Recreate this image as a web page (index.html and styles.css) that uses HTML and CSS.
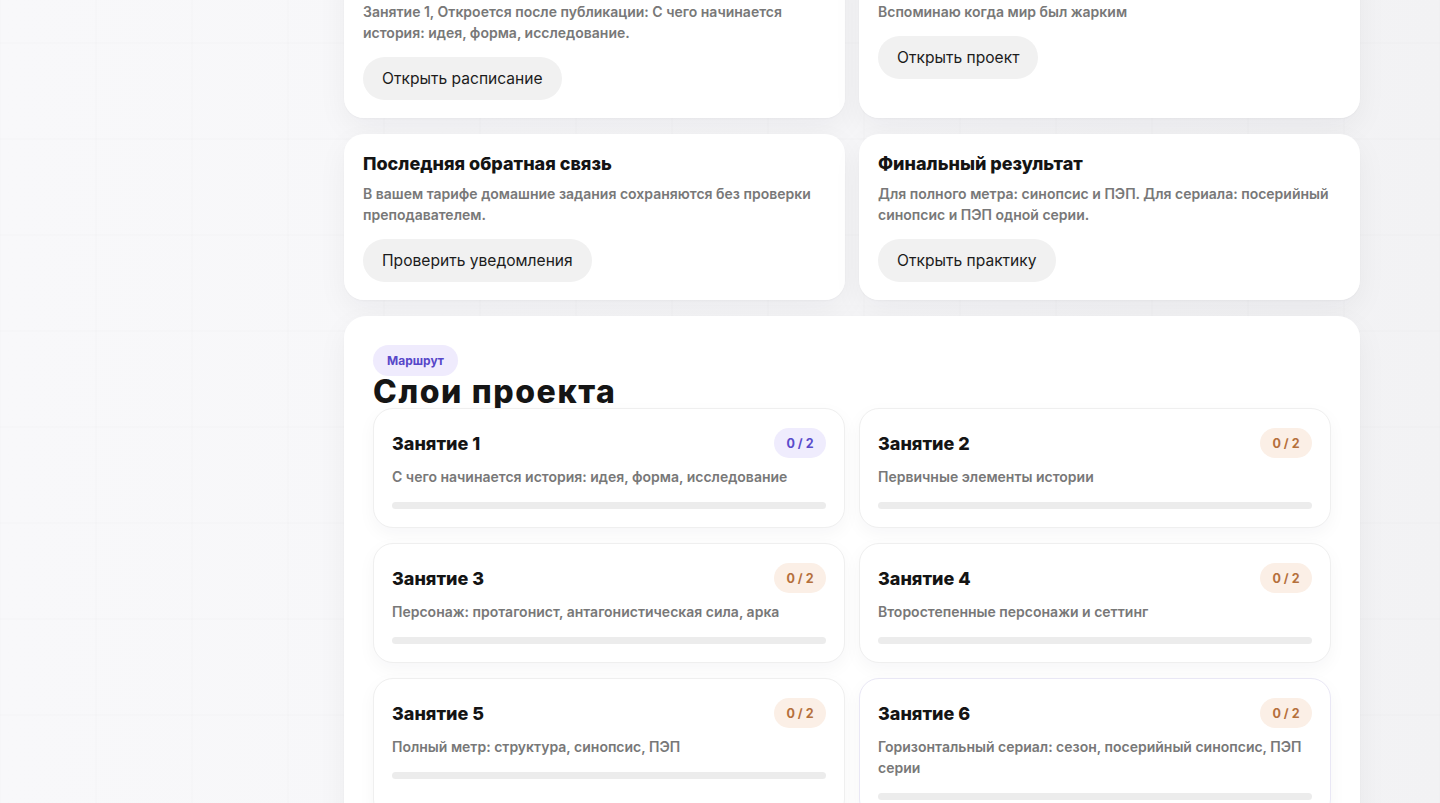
FILE: index.html
```
<!DOCTYPE html>
<html lang="ru">
<head>
<meta charset="utf-8">
<title>Слои проекта</title>
<link rel="stylesheet" href="styles.css">
</head>
<body>
<div class="page">
  <main class="main">
    <section class="info-grid">
      <article class="card">
        <h3 class="card-title">Ближайшее занятие</h3>
        <p class="card-text">Занятие 1, Откроется после публикации: С чего начинается история: идея, форма, исследование.</p>
        <button class="btn">Открыть расписание</button>
      </article>
      <article class="card">
        <h3 class="card-title">Текущий проект</h3>
        <p class="card-text">Вспоминаю когда мир был жарким</p>
        <button class="btn">Открыть проект</button>
      </article>
      <article class="card">
        <h3 class="card-title">Последняя обратная связь</h3>
        <p class="card-text">В вашем тарифе домашние задания сохраняются без проверки преподавателем.</p>
        <button class="btn">Проверить уведомления</button>
      </article>
      <article class="card">
        <h3 class="card-title">Финальный результат</h3>
        <p class="card-text">Для полного метра: синопсис и ПЭП. Для сериала: посерийный синопсис и ПЭП одной серии.</p>
        <button class="btn">Открыть практику</button>
      </article>
    </section>

    <section class="route">
      <span class="tag">Маршрут</span>
      <h2 class="route-title">Слои проекта</h2>
      <div class="lessons">
        <article class="lesson">
          <div class="lesson-head"><h4 class="lesson-title">Занятие 1</h4><span class="count count-active">0 / 2</span></div>
          <p class="lesson-text">С чего начинается история: идея, форма, исследование</p>
          <div class="bar"></div>
        </article>
        <article class="lesson">
          <div class="lesson-head"><h4 class="lesson-title">Занятие 2</h4><span class="count">0 / 2</span></div>
          <p class="lesson-text">Первичные элементы истории</p>
          <div class="bar"></div>
        </article>
        <article class="lesson">
          <div class="lesson-head"><h4 class="lesson-title">Занятие 3</h4><span class="count">0 / 2</span></div>
          <p class="lesson-text">Персонаж: протагонист, антагонистическая сила, арка</p>
          <div class="bar"></div>
        </article>
        <article class="lesson">
          <div class="lesson-head"><h4 class="lesson-title">Занятие 4</h4><span class="count">0 / 2</span></div>
          <p class="lesson-text">Второстепенные персонажи и сеттинг</p>
          <div class="bar"></div>
        </article>
        <article class="lesson">
          <div class="lesson-head"><h4 class="lesson-title">Занятие 5</h4><span class="count">0 / 2</span></div>
          <p class="lesson-text">Полный метр: структура, синопсис, ПЭП</p>
          <div class="bar"></div>
        </article>
        <article class="lesson lesson-hover">
          <div class="lesson-head"><h4 class="lesson-title">Занятие 6</h4><span class="count">0 / 2</span></div>
          <p class="lesson-text">Горизонтальный сериал: сезон, посерийный синопсис, ПЭП серии</p>
          <div class="bar"></div>
        </article>
      </div>
    </section>
  </main>
</div>
</body>
</html>
```

FILE: styles.css
```
* { box-sizing: border-box; }

html, body {
  margin: 0;
  padding: 0;
  height: 100%;
  overflow: hidden;
}

body {
  font-family: Inter, "Noto Sans", "Liberation Sans", sans-serif;
  color: #161616;
  background-color: #f6f6f8;
  background-image:
    linear-gradient(to right, rgba(0, 0, 0, 0.007) 2px, transparent 2px),
    linear-gradient(to bottom, rgba(0, 0, 0, 0.007) 2px, transparent 2px),
    linear-gradient(to right, #f8f8fa 0%, #f6f6f8 60%, #f2f2f4 100%);
  background-size: 96px 96px, 96px 96px, 100% 100%;
  background-position: -1px 0, 0 42px, 0 0;
}

.page {
  padding-left: 344px;
}

.main {
  width: 1016px;
  margin-top: -48px;
  display: flex;
  flex-direction: column;
  gap: 16px;
}

.info-grid {
  display: grid;
  grid-template-columns: 1fr 1fr;
  column-gap: 14px;
  row-gap: 16px;
}

.card {
  background: rgba(255, 255, 255, 0.96);
  border-radius: 20px;
  padding: 19px 19px 18px;
  box-shadow: 0 10px 30px rgba(20, 20, 40, 0.05), 0 1px 2px rgba(20, 20, 40, 0.03);
  display: flex;
  flex-direction: column;
  align-items: flex-start;
}

.card-title {
  margin: 0;
  font-size: 18px;
  line-height: 22px;
  font-weight: 800;
  letter-spacing: 0;
  color: #141414;
}

.card-text {
  margin: 8px 0 0;
  font-size: 14px;
  line-height: 21px;
  font-weight: 600;
  color: #787878;
}

.btn {
  margin-top: 14px;
  height: 43px;
  padding: 0 19px;
  border: 0;
  border-radius: 22px;
  background: #f1f1f1;
  font-family: inherit;
  font-size: 15.6px;
  font-weight: 400;
  color: #1c1c1c;
}

.route {
  background: rgba(255, 255, 255, 0.95);
  border-radius: 22px;
  padding: 29px 29px 29px;
  box-shadow: 0 10px 30px rgba(20, 20, 40, 0.05), 0 1px 2px rgba(20, 20, 40, 0.03);
  display: flex;
  flex-direction: column;
  align-items: flex-start;
}

.tag {
  display: inline-flex;
  align-items: center;
  height: 31px;
  padding: 0 14px;
  border-radius: 16px;
  background: #efebfd;
  color: #5747c9;
  font-size: 12px;
  font-weight: 700;
}

.route-title {
  margin: 0;
  font-size: 32px;
  line-height: 32px;
  font-weight: 800;
  letter-spacing: 1.6px;
  color: #151515;
}

.lessons {
  align-self: stretch;
  display: grid;
  grid-template-columns: 1fr 1fr;
  column-gap: 14px;
  row-gap: 15px;
}

.lesson {
  background: #fff;
  border: 1px solid #efefef;
  border-radius: 20px;
  padding: 19px 18px 18px;
  box-shadow: 0 6px 18px rgba(20, 20, 40, 0.04);
}

.lesson-hover {
  border-color: #e9e7f5;
}

.lesson-head {
  display: flex;
  align-items: center;
  justify-content: space-between;
  height: 30px;
}

.lesson-title {
  margin: 0;
  font-size: 18px;
  font-weight: 800;
  letter-spacing: 0;
  color: #141414;
}

.count {
  display: inline-flex;
  align-items: center;
  justify-content: center;
  width: 52px;
  height: 30px;
  border-radius: 15px;
  background: #fbefe6;
  color: #b5703c;
  font-size: 12.5px;
  font-weight: 700;
}

.count-active {
  background: #efecfd;
  color: #5a4bcb;
}

.lesson-text {
  margin: 8px 0 0;
  font-size: 14px;
  line-height: 21px;
  font-weight: 600;
  color: #787878;
}

.bar {
  margin-top: 15px;
  height: 7px;
  border-radius: 4px;
  background: #ececec;
}
```
